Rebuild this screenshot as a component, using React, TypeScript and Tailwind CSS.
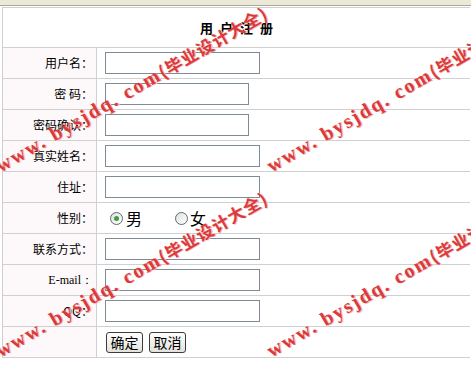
import React from "react";

const labelFont = { fontFamily: '"Noto Sans CJK SC", "Liberation Sans", sans-serif' };

function Row({ label, children, serif }: { label: string; children: React.ReactNode; serif?: boolean }) {
  return (
    <div className="flex h-[31px] border-b border-[#d0d0d0]">
      <div
        className="w-[93px] shrink-0 bg-[#fdf8f9] flex items-center justify-end pr-[3px] text-[12px] text-black"
        style={serif ? { fontFamily: '"Liberation Serif", serif' } : labelFont}
      >
        {label}
      </div>
      <div className="w-px bg-[#d0d0d0] shrink-0" />
      <div className="flex items-center pl-[8px] flex-1">{children}</div>
    </div>
  );
}

function Input({ w }: { w: number }) {
  return <div className="h-[22px] border border-[#7f8c95] bg-white" style={{ width: w }} />;
}

function Radio({ checked }: { checked?: boolean }) {
  return (
    <span className="w-[13px] h-[13px] rounded-full border border-[#5a6a7a] bg-gradient-to-br from-[#e0e0dc] to-white flex items-center justify-center">
      {checked && <span className="w-[5px] h-[5px] rounded-full bg-[#3aa040]" />}
    </span>
  );
}

function Btn({ children }: { children: React.ReactNode }) {
  return (
    <button
      className="h-[21px] w-[37px] rounded-[3px] border border-[#3c3c3c] bg-gradient-to-b from-white to-[#e2e2dc] text-[14px] leading-none text-black flex items-center justify-center"
      style={labelFont}
    >
      {children}
    </button>
  );
}

function Mark({ x, y }: { x: number; y: number }) {
  return (
    <span
      className="absolute whitespace-nowrap origin-bottom-left rotate-[-30deg] leading-[22px] font-bold text-[#dc3a3a] pointer-events-none"
      style={{
        left: x,
        top: y - 22,
        textShadow: "1px 1px 0 #f2b8b8",
      }}
    >
      <span className="text-[20px] tracking-[2px]" style={{ fontFamily: '"Liberation Serif", serif' }}>
        www.&nbsp;bysjdq.&nbsp;com
      </span>
      <span className="text-[17px] tracking-[1px]" style={{ fontFamily: '"Noto Sans CJK SC", sans-serif' }}>
        (毕业设计大全)
      </span>
    </span>
  );
}

export default function App() {
  return (
    <div className="relative w-[471px] h-[374px] overflow-hidden bg-white">
      <div className="h-[6px] bg-[#ece9d8] border-b border-[#a8a8a0]" />
      <div className="ml-[2px] mt-px w-[468px] border-l border-t border-[#d0d0d0]">
        <div className="h-[40px] border-b border-[#d0d0d0] flex items-center justify-center">
          <span className="text-[13px] font-bold text-black tracking-[2px] pl-[2px]" style={labelFont}>
            用 户 注 册
          </span>
        </div>
        <Row label="用户名："><Input w={155} /></Row>
        <Row label="密  码："><Input w={144} /></Row>
        <Row label="密码确认："><Input w={144} /></Row>
        <Row label="真实姓名："><Input w={155} /></Row>
        <Row label="住址："><Input w={155} /></Row>
        <Row label="性别：">
          <div className="flex items-center text-[16px] text-black" style={labelFont}>
            <span className="ml-[5px]"><Radio checked /></span>
            <span className="ml-[3px]">男</span>
            <span className="ml-[33px]"><Radio /></span>
            <span className="ml-[2px]">女</span>
          </div>
        </Row>
        <Row label="联系方式："><Input w={155} /></Row>
        <Row label="E-mail：" serif><Input w={155} /></Row>
        <Row label="QQ："><Input w={155} /></Row>
        <Row label="">
          <div className="flex items-center gap-[6px] pl-px">
            <Btn>确定</Btn>
            <Btn>取消</Btn>
          </div>
        </Row>
      </div>
      <Mark x={3} y={176} />
      <Mark x={3} y={361} />
      <Mark x={274} y={176} />
      <Mark x={274} y={361} />
    </div>
  );
}
